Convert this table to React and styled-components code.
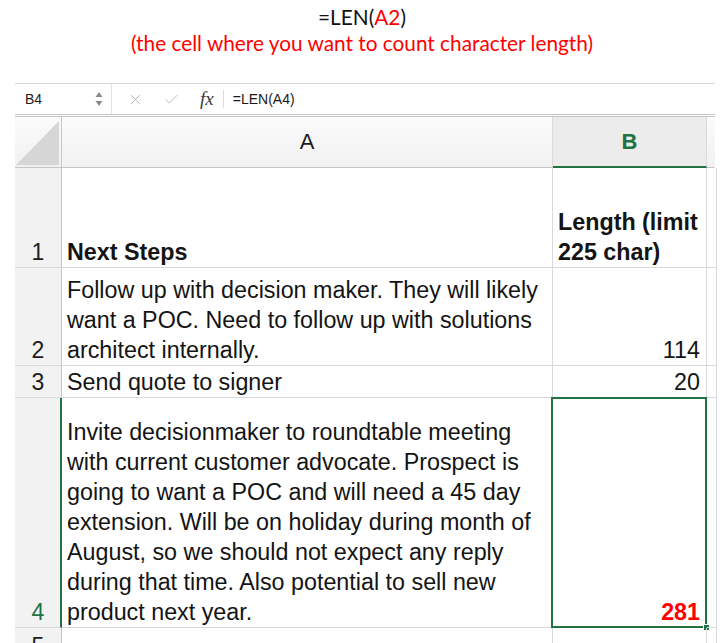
import React from "react";
import styled, { createGlobalStyle } from "styled-components";
import { X, Check } from "lucide-react";

const GREEN = "#217346";
const SANS = `"Liberation Sans", Arial, Helvetica, sans-serif`;

const GlobalStyle = createGlobalStyle`
  html, body { margin: 0; padding: 0; background: #fff; }
  body { font-family: ${SANS}; }
  * { box-sizing: border-box; }
`;

const Page = styled.div`
  width: 724px;
  height: 643px;
  overflow: hidden;
  background: #fff;
`;

const Caption = styled.div`
  padding-top: 4px;
  text-align: center;
  font-family: Lato, "Open Sans", sans-serif;
  font-size: 20.8px;
  line-height: 26px;
`;

const CaptionLine = styled.div`
  color: ${(p) => (p.$red ? "#ff0000" : "#111")};
`;

const Red = styled.span`
  color: #ff0000;
`;

const Sheet = styled.div`
  margin: 27px 0 0 15px;
  width: 700px;
  font-family: ${SANS};
`;

const FormulaBar = styled.div`
  display: flex;
  align-items: center;
  height: 34px;
  border-top: 1px solid #d9d6d0;
  border-bottom: 3px double #c4c4c4;
  font-size: 14px;
  color: #222;
`;

const NameBox = styled.div`
  display: flex;
  align-items: center;
  justify-content: space-between;
  width: 97px;
  height: 100%;
  padding: 0 8px 0 10px;
  border-right: 1px solid #e2e2e2;
`;

const BarActions = styled.div`
  display: flex;
  align-items: center;
  gap: 19px;
  padding-left: 15px;
  color: #bdbdbd;
`;

const Fx = styled.span`
  font-family: "Liberation Serif", "DejaVu Serif", serif;
  font-style: italic;
  font-size: 19px;
  color: #3a3a3a;
  margin-left: 1px;
`;

const BarDivider = styled.div`
  width: 1px;
  height: 18px;
  background: #dcdcdc;
  margin: 0 9px 0 9px;
`;

const FormulaText = styled.span`
  font-size: 14px;
  color: #1a1a1a;
`;

const Grid = styled.div`
  display: grid;
  grid-template-columns: 47px 491px 154px 8px;
  grid-template-rows: 51px 100px 98px 32px 230px 34px;
`;

const Corner = styled.div`
  display: flex;
  align-items: flex-end;
  justify-content: flex-end;
  padding: 0 2px 2px 0;
  background: linear-gradient(#fbfbfb, #f1f1f1);
  border-right: 1px solid #c6c6c6;
  border-bottom: 1px solid #c6c6c6;
`;

const CornerTriangle = styled.div`
  width: 43px;
  height: 44px;
  background: #d6d6d6;
  clip-path: polygon(100% 0, 100% 100%, 0 100%);
`;

const ColHead = styled.div`
  display: flex;
  align-items: center;
  justify-content: center;
  font-size: 22px;
  font-weight: ${(p) => (p.$active ? 700 : 400)};
  color: ${(p) => (p.$active ? GREEN : "#1c1c1c")};
  background: ${(p) =>
    p.$active ? "#ececec" : "linear-gradient(#fbfbfb, #f1f1f1)"};
  border-right: 1px solid ${(p) => (p.$last ? "transparent" : "#dadada")};
  border-bottom: ${(p) =>
    p.$active ? `2px solid ${GREEN}` : "1px solid #c6c6c6"};
  padding-top: ${(p) => (p.$active ? "1px" : "0")};
`;

const RowHead = styled.div`
  display: flex;
  align-items: flex-end;
  justify-content: center;
  font-size: 23px;
  line-height: 30px;
  background: #f2f2f2;
  color: ${(p) => (p.$active ? GREEN : "#1c1c1c")};
  border-right: ${(p) =>
    p.$active ? `2px solid ${GREEN}` : "1px solid #c6c6c6"};
  border-bottom: 1px solid #d9d9d9;
  padding-left: ${(p) => (p.$active ? "1px" : "0")};
`;

const Cell = styled.div`
  position: relative;
  display: flex;
  align-items: flex-end;
  justify-content: ${(p) => (p.$num ? "flex-end" : "flex-start")};
  padding: ${(p) => (p.$num ? "0 6px 0 5px" : "0 4px 0 5px")};
  font-size: 23.3px;
  line-height: 30px;
  font-weight: ${(p) => (p.$bold ? 700 : 400)};
  color: ${(p) => (p.$red ? "#ff0000" : "#141414")};
  border-right: 1px solid #d9d9d9;
  border-bottom: 1px solid #d9d9d9;
`;

const CellText = styled.div`
  text-align: ${(p) => (p.$num ? "right" : "left")};
`;

const Selection = styled.div`
  position: absolute;
  top: -1px;
  left: -2px;
  right: -1px;
  bottom: -1px;
  border: 2px solid ${GREEN};
  pointer-events: none;
`;

const Handle = styled.div`
  position: absolute;
  right: -5px;
  bottom: -5px;
  width: 7px;
  height: 7px;
  background: ${GREEN};
  border: 1px solid #fff;
`;

const Stepper = () => (
  <svg width="8" height="16" viewBox="0 0 8 16">
    <polygon points="4,1 7.5,6 0.5,6" fill="#8c8c8c" />
    <polygon points="0.5,10 7.5,10 4,15" fill="#8c8c8c" />
  </svg>
);

const rows = [
  {
    n: "1",
    a: "Next Steps",
    b: "Length (limit 225 char)",
    bold: true,
  },
  {
    n: "2",
    a: "Follow up with decision maker. They will likely want a POC. Need to follow up with solutions architect internally.",
    b: "114",
    num: true,
  },
  { n: "3", a: "Send quote to signer", b: "20", num: true },
  {
    n: "4",
    a: "Invite decisionmaker to roundtable meeting with current customer advocate. Prospect is going to want a POC and will need a 45 day extension. Will be on holiday during month of August, so we should not expect any reply during that time. Also potential to sell new product next year.",
    b: "281",
    num: true,
    red: true,
    active: true,
  },
  { n: "5", a: "", b: "" },
];

export default function App() {
  return (
    <Page>
      <GlobalStyle />
      <Caption>
        <CaptionLine>
          =LEN(<Red>A2</Red>)
        </CaptionLine>
        <CaptionLine $red>
          (the cell where you want to count character length)
        </CaptionLine>
      </Caption>
      <Sheet>
        <FormulaBar>
          <NameBox>
            <span>B4</span>
            <Stepper />
          </NameBox>
          <BarActions>
            <X size={17} strokeWidth={1.4} />
            <Check size={17} strokeWidth={1.4} />
            <Fx>fx</Fx>
          </BarActions>
          <BarDivider />
          <FormulaText>=LEN(A4)</FormulaText>
        </FormulaBar>
        <Grid>
          <Corner>
            <CornerTriangle />
          </Corner>
          <ColHead>A</ColHead>
          <ColHead $active>B</ColHead>
          <ColHead $last />
          {rows.map((r) => (
            <React.Fragment key={r.n}>
              <RowHead $active={r.active}>{r.n}</RowHead>
              <Cell $bold={r.bold}>
                <CellText>{r.a}</CellText>
              </Cell>
              <Cell $num={r.num} $bold={r.bold || r.red} $red={r.red}>
                <CellText $num={r.num}>{r.b}</CellText>
                {r.active && (
                  <Selection>
                    <Handle />
                  </Selection>
                )}
              </Cell>
              <Cell />
            </React.Fragment>
          ))}
        </Grid>
      </Sheet>
    </Page>
  );
}
